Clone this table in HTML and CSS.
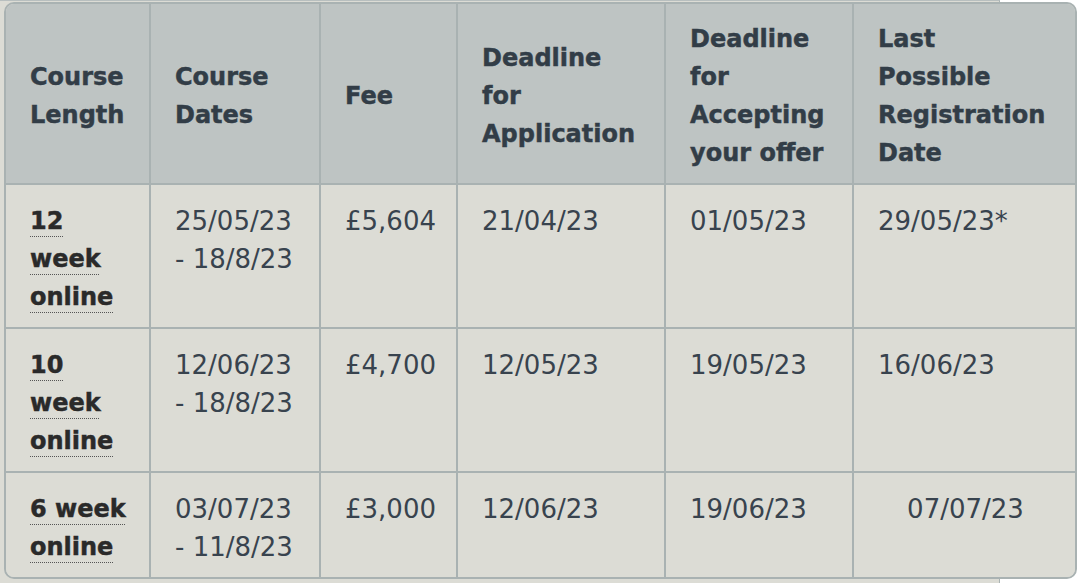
FILE: index.html
```html
<!DOCTYPE html>
<html lang="en">
<head>
<meta charset="utf-8">
<title>Course dates</title>
<link rel="stylesheet" href="styles.css">
</head>
<body>
<div class="wrap">
  <div class="card">
    <table class="courses">
      <colgroup>
        <col class="c1"><col class="c2"><col class="c3"><col class="c4"><col class="c5"><col class="c6">
      </colgroup>
      <thead>
        <tr>
          <th>Course Length</th>
          <th>Course Dates</th>
          <th>Fee</th>
          <th>Deadline for Application</th>
          <th>Deadline for Accepting your offer</th>
          <th>Last Possible Registration Date</th>
        </tr>
      </thead>
      <tbody>
        <tr>
          <td class="len"><span class="lnk">12 week online</span></td>
          <td>25/05/23 - 18/8/23</td>
          <td>£5,604</td>
          <td>21/04/23</td>
          <td>01/05/23</td>
          <td>29/05/23*</td>
        </tr>
        <tr>
          <td class="len"><span class="lnk">10 week online</span></td>
          <td>12/06/23 - 18/8/23</td>
          <td>£4,700</td>
          <td>12/05/23</td>
          <td>19/05/23</td>
          <td>16/06/23</td>
        </tr>
        <tr>
          <td class="len"><span class="lnk">6 week online</span></td>
          <td>03/07/23 - 11/8/23</td>
          <td>£3,000</td>
          <td>12/06/23</td>
          <td>19/06/23</td>
          <td class="center">07/07/23</td>
        </tr>
      </tbody>
    </table>
  </div>
</div>
</body>
</html>
```
FILE: styles.css
```css
html, body {
  margin: 0;
  padding: 0;
  background: #ffffff;
  overflow: hidden;
}

.wrap {
  width: 1000px;
  height: 583px;
  box-sizing: border-box;
  background: #dcdcd5;
  border-top: 1px solid #b8bfbf;
  border-right: 1px solid #aab3b3;
  padding: 1px 0 0 4px;
}

.card {
  width: 1073px;
  box-sizing: border-box;
  border: 2px solid #a9b2b2;
  border-radius: 10px;
  overflow: hidden;
  background: #dcdcd5;
}

.courses {
  width: 1069px;
  table-layout: fixed;
  border-collapse: separate;
  border-spacing: 0;
  font-family: "DejaVu Sans", "Liberation Sans", sans-serif;
  font-size: 24px;
  line-height: 38px;
}

.c1 { width: 145px; }
.c2 { width: 170px; }
.c3 { width: 137px; }
.c4 { width: 208px; }
.c5 { width: 188px; }
.c6 { width: 221px; }

.courses th,
.courses td {
  text-align: left;
  border-right: 2px solid #a9b2b2;
  border-bottom: 2px solid #a9b2b2;
  padding: 17px 20px 11px 24px;
}

.courses th:last-child,
.courses td:last-child {
  border-right: none;
  padding-right: 22px;
}

.courses tbody tr:last-child td {
  border-bottom: none;
}

.courses th {
  background: #bec4c3;
  color: #323d47;
  font-weight: bold;
  vertical-align: middle;
  padding-top: 16px;
  -webkit-text-stroke: 0.45px #323d47;
}

.courses td {
  background: #dcdcd5;
  color: #38434e;
  font-size: 26px;
  font-weight: normal;
  vertical-align: top;
}

.courses td.len {
  color: #2a2a2a;
  font-size: 24px;
  font-weight: bold;
  -webkit-text-stroke: 0.45px #2a2a2a;
}

.lnk {
  text-decoration: underline dotted #555555 1px;
  text-underline-offset: 7px;
}

.courses td.center {
  text-align: center;
}
```
